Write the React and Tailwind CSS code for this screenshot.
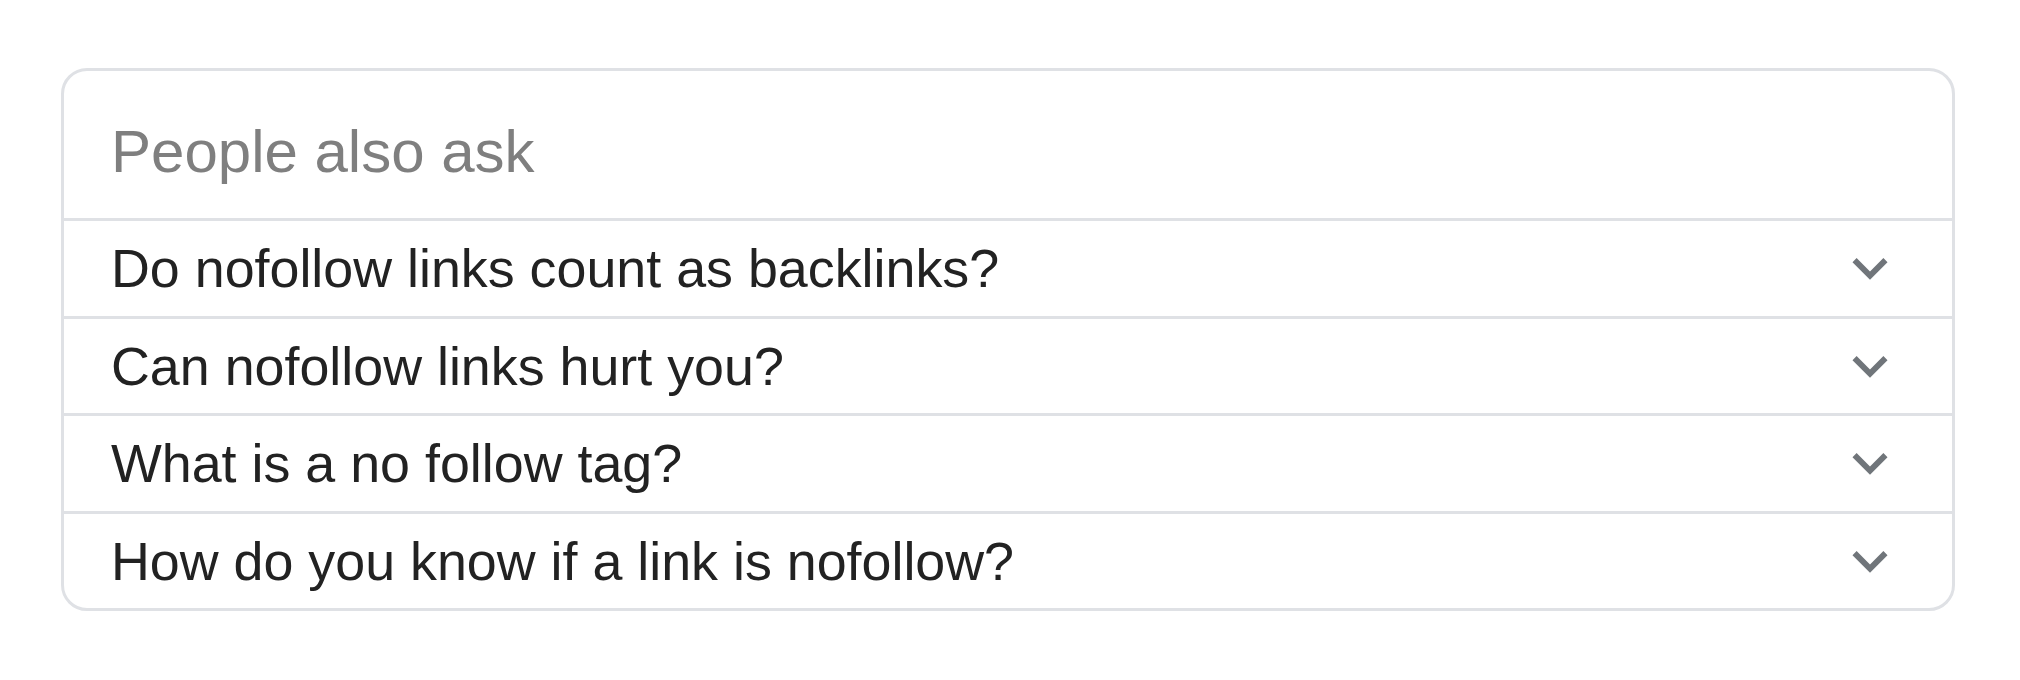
const questions = [
  'Do nofollow links count as backlinks?',
  'Can nofollow links hurt you?',
  'What is a no follow tag?',
  'How do you know if a link is nofollow?',
];

const ExpandMore = () => (
  <svg viewBox="0 0 24 24" className="w-[70px] h-[70px] shrink-0" fill="#70757a">
    <path d="M16.59 8.59L12 13.17 7.41 8.59 6 10l6 6 6-6z" />
  </svg>
);

const App = () => {
  return (
    <div className="min-h-[680px] bg-white pl-[61px] pt-[68px] font-['Liberation_Sans',Arial,sans-serif]">
      <div className="w-[1894px] rounded-[26px] border-[3px] border-[#dfe1e5] overflow-hidden">
        <div className="h-[147px] pl-[47px] pt-[51px]">
          <h2 className="text-[60px] leading-[60px] text-[#7f7f7f] font-normal">People also ask</h2>
        </div>
        {questions.map((q) => (
          <div
            key={q}
            className="h-[97.5px] border-t-[3px] border-[#dfe1e5] flex items-center justify-between pl-[47px] pr-[47px]"
          >
            <span className="text-[53.8px] leading-[54px] text-[#222222]">{q}</span>
            <ExpandMore />
          </div>
        ))}
      </div>
    </div>
  );
};

export default App;
